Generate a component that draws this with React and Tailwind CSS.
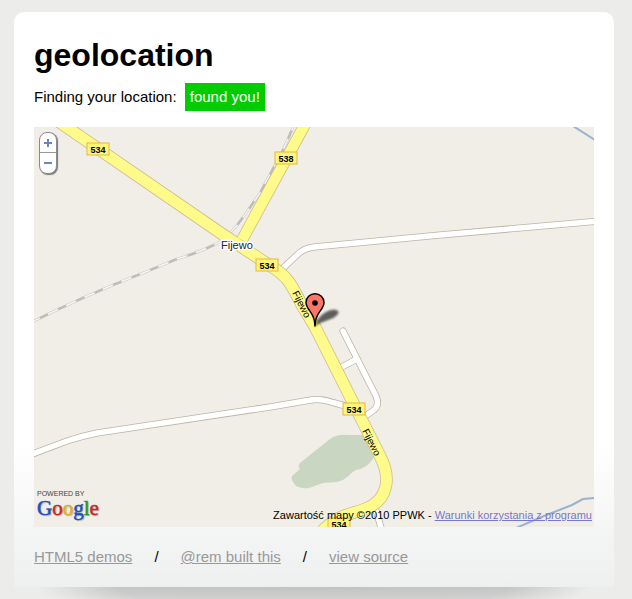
import React from "react";

const RAILWAY =
  "M-2,195 C30,179 70,161 109,146 L143,132 C160,127 172,122 184,116 C200,106 212,86 226,66 L249,23 L261,-4";
const MAIN_ROAD =
  "M18,-10 L191,109 L238,140 C256,151 258,160 269,180 L281,200 L346,329 C357,350 355,373 331,382 C314,388 306,387 288,404";
const SIDE_ROAD_538 = "M275,-10 L208,113";
const LANES = [
  "M246,144 L263,128 Q270,121 280,120 L406,108 L566,94",
  "M-4,328 L33,314 Q48,309 63,306 L236,280 L277,273 C290,271 298,276 312,279",
  "M309,204 L342,269 Q346,278 340,283 L330,290",
  "M304,242 L323,232",
  "M341,380 L348,404",
];

const SHIELDS = [
  { label: "534", x: 64, y: 22 },
  { label: "538", x: 252, y: 31 },
  { label: "534", x: 233, y: 138 },
  { label: "534", x: 320, y: 282 },
  { label: "534", x: 305, y: 397 },
];

const FOOTER_LINKS = [
  { label: "HTML5 demos", href: "#demos" },
  { label: "@rem built this", href: "#rem" },
  { label: "view source", href: "#source" },
];

const Shield = ({ label, x, y }) => (
  <g>
    <rect
      x={x - 11}
      y={y - 6}
      width="22"
      height="12"
      fill="#fff47c"
      stroke="#e3b73c"
    />
    <text
      x={x}
      y={y + 4}
      textAnchor="middle"
      className="text-[9px] font-bold"
      fill="#000"
    >
      {label}
    </text>
  </g>
);

const Marker = () => (
  <g>
    <path
      d="M281,200 C282,192 289,185 297,183 C304,182 307,185 302,189 C296,194 286,194 281,200 Z"
      fill="#000"
      opacity="0.6"
      filter="url(#soft)"
    />
    <path
      d="M281,199 L280.400,194 C279,185 272,182 272,175.500 A9,8.800 0 0 1 290,175.500 C290,182 283,185 281.600,194 Z"
      fill="#fd7567"
      stroke="#000"
      strokeWidth="1.500"
      strokeLinejoin="round"
    />
    <circle cx="281" cy="176" r="2.800" fill="#000" />
  </g>
);

const MapDrawing = () => (
  <svg
    viewBox="0 0 560 400"
    className="block w-full font-['Liberation_Sans',Arial,sans-serif]"
    role="img"
    aria-label="Map of Fijewo"
  >
    <defs>
      <filter id="soft" x="-30%" y="-30%" width="160%" height="160%">
        <feGaussianBlur stdDeviation="1.2" />
      </filter>
    </defs>
    <rect width="560" height="400" fill="#f1eee8" />

    {/* Park and rivers */}
    <path
      d="M331,308 L314,308 Q303,307 296,312 L281,324 L266,336 Q263,339 266,342 L258,349 Q256,352 262,359 Q268,362 275,361 L289,356 L303,355 C313,353 316,346 322,343 C330,342 336,337 340,330 Z"
      fill="#c9d7c2"
    />
    <path
      d="M539,-1 L561,13 M482,401 L510,389 L538,378 L549,372 L561,371"
      fill="none"
      stroke="#99b3cc"
      strokeWidth="2"
    />

    {/* Railway */}
    <path d={RAILWAY} fill="none" stroke="#c9c8c4" strokeWidth="2.600" />
    <path d={RAILWAY} fill="none" stroke="#f7f6f2" strokeWidth="1.400" />
    <path
      d={RAILWAY}
      fill="none"
      stroke="#bcbcba"
      strokeWidth="2.200"
      strokeDasharray="9 11"
      strokeDashoffset="-9"
    />

    {/* Lanes */}
    <g fill="none" strokeLinecap="round" strokeLinejoin="round">
      {LANES.map((d) => (
        <path key={d} d={d} stroke="#b9b5a4" strokeWidth="7" />
      ))}
      {LANES.map((d) => (
        <path key={d} d={d} stroke="#fff" strokeWidth="5.400" />
      ))}
    </g>

    {/* Numbered roads */}
    <g fill="none">
      <path d={SIDE_ROAD_538} stroke="#c9b98a" strokeWidth="12" />
      <path d={MAIN_ROAD} stroke="#c9b98a" strokeWidth="12.500" />
      <path d={SIDE_ROAD_538} stroke="#fffb8b" strokeWidth="10.500" />
      <path d={MAIN_ROAD} stroke="#fffb8b" strokeWidth="11" />
    </g>

    {SHIELDS.map((item) => (
      <Shield key={`${item.x}-${item.y}`} {...item} />
    ))}

    <text
      x="187"
      y="122"
      className="text-[11px]"
      fill="#222"
      stroke="#fff"
      strokeWidth="3"
      paintOrder="stroke"
      strokeLinejoin="round"
    >
      Fijewo
    </text>
    <text
      transform="translate(258 166) rotate(63)"
      className="text-[10px]"
      fill="#000"
    >
      Fijewo
    </text>
    <text
      transform="translate(328 304) rotate(63)"
      className="text-[10px]"
      fill="#000"
    >
      Fijewo
    </text>

    <Marker />
  </svg>
);

const ZoomControl = () => (
  <div className="absolute top-[5px] left-[5px] flex w-[18px] flex-col overflow-hidden rounded-lg border border-[#8b8b8b] bg-white shadow-[1px_1px_1px_#777]">
    <button
      type="button"
      aria-label="Zoom in"
      className="flex h-5 items-center justify-center border-b border-[#999]"
    >
      <svg viewBox="0 0 8 8" className="size-2" stroke="#6a86c0" strokeWidth="2">
        <path d="M0,4 H8 M4,0 V8" />
      </svg>
    </button>
    <button
      type="button"
      aria-label="Zoom out"
      className="flex h-5 items-center justify-center"
    >
      <svg viewBox="0 0 8 8" className="size-2" stroke="#6a86c0" strokeWidth="2">
        <path d="M0,4 H8" />
      </svg>
    </button>
  </div>
);

const GoogleLogo = () => (
  <div className="absolute bottom-2 left-[3px] flex flex-col">
    <span className="text-[7px] leading-[6px] text-[#444]">POWERED BY</span>
    <span className="font-['Liberation_Serif',serif] text-[21px] leading-[22px] [-webkit-text-stroke:0.5px] [text-shadow:1px_1px_1px_#aaa]">
      <span className="text-[#1f4fc4]">G</span>
      <span className="text-[#c9291d]">o</span>
      <span className="text-[#e0b01c]">o</span>
      <span className="text-[#1f4fc4]">g</span>
      <span className="text-[#209a35]">l</span>
      <span className="text-[#c9291d]">e</span>
    </span>
  </div>
);

const App = () => {
  return (
    <div className="min-h-screen overflow-hidden bg-[#ececea] pt-3 pr-[18px] pl-[14px] font-['Liberation_Sans',Arial,sans-serif] text-[15px] text-black">
      <main className="mx-auto max-w-[600px] rounded-t-[10px] bg-linear-to-b from-white from-75% to-[#eeefef] px-5 pt-6 pb-[18px]">
        <h1 className="text-[32px] leading-[38px] font-bold">geolocation</h1>

        <p className="mt-[9px] leading-7">
          Finding your location:{" "}
          <span className="ml-1 inline-block bg-[#00cc00] px-[5px] text-white">
            found you!
          </span>
        </p>

        <div className="relative mt-4 overflow-hidden">
          <MapDrawing />
          <ZoomControl />
          <GoogleLogo />
          <p className="absolute right-0.5 bottom-1 text-[11px] leading-4">
            Zawartość mapy ©2010 PPWK -{" "}
            <a href="#terms" className="text-[#7777cc] underline">
              Warunki korzystania z programu
            </a>
          </p>
        </div>

        <footer className="mt-[18px] flex flex-wrap gap-x-[22px] leading-6">
          {FOOTER_LINKS.map((link, i) => (
            <React.Fragment key={link.label}>
              {i > 0 && <span>/</span>}
              <a href={link.href} className="text-[#999] underline">
                {link.label}
              </a>
            </React.Fragment>
          ))}
        </footer>
      </main>
      <div className="mx-auto h-6 max-w-[600px] bg-[linear-gradient(to_bottom,#ececea00,#ececeaaa),radial-gradient(ellipse_46%_150%_at_50%_0%,#c2c2c2_0%,#c4c4c4_70%,#ececea_100%)]" />
    </div>
  );
};

export default App;
